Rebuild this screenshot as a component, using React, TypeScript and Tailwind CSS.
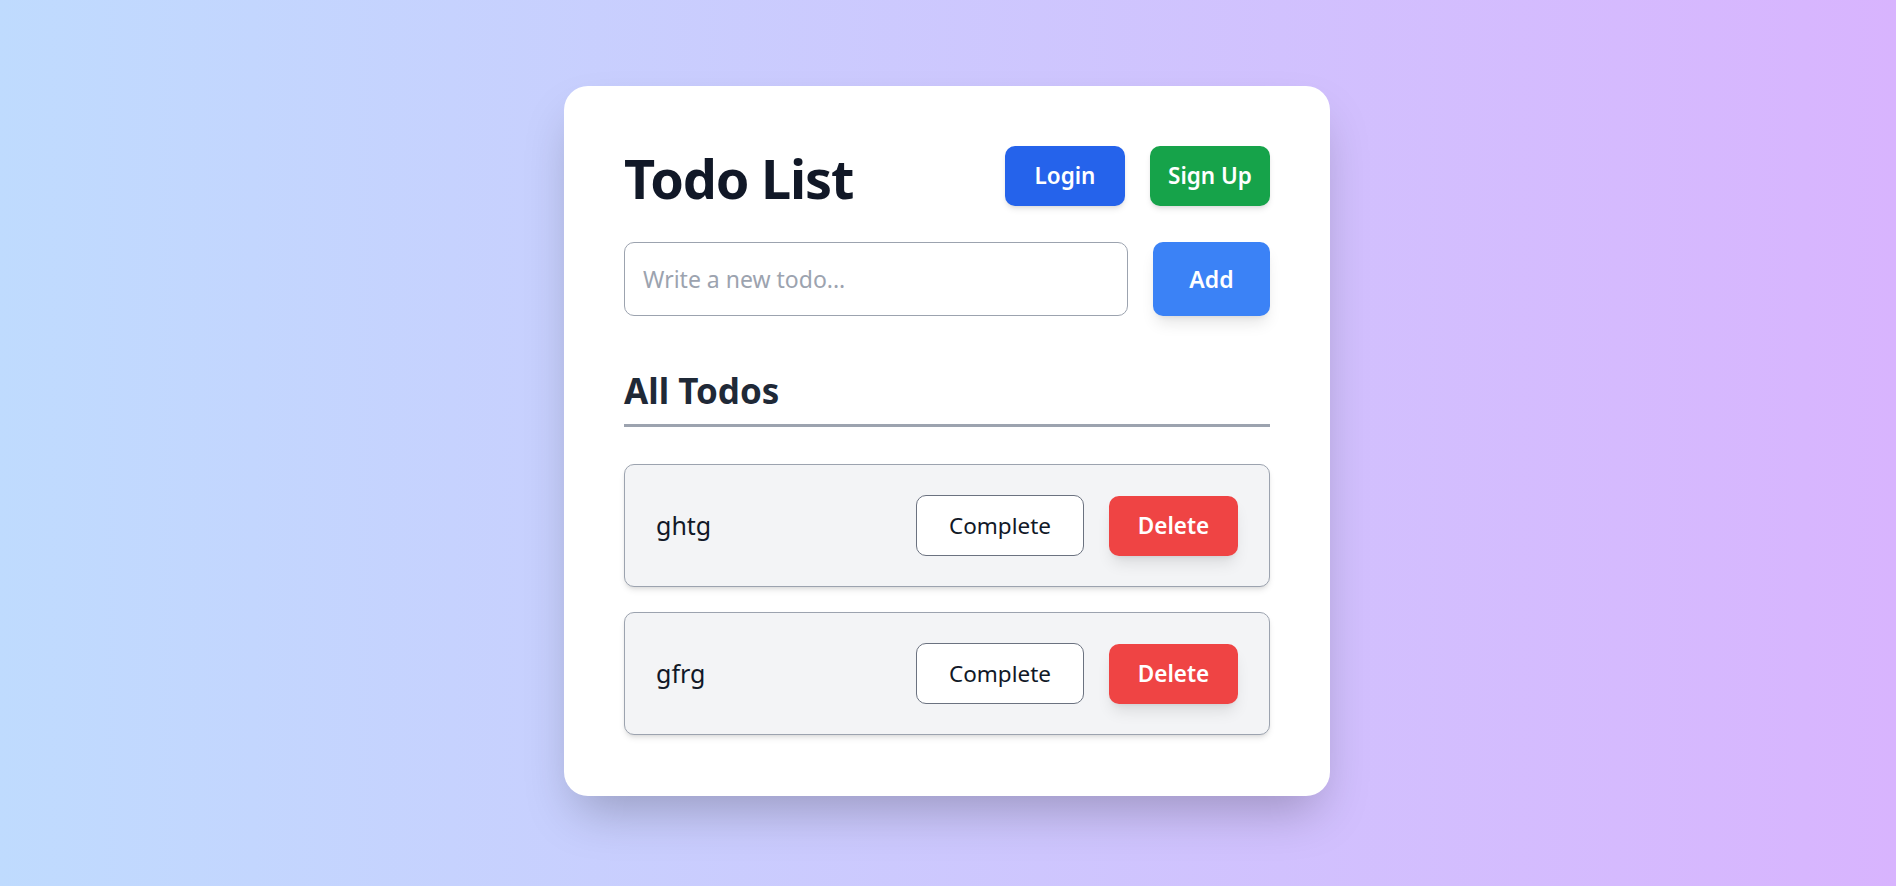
import React from "react";

const todos = ["ghtg", "gfrg"];

export default function App() {
  return (
    <div
      className="min-h-screen w-full bg-gradient-to-r from-[#bfdbfe] to-[#d8b4fe] flex justify-center pt-[86px]"
      style={{ fontFamily: '"Noto Sans", "Open Sans", sans-serif' }}
    >
      <div className="w-[766px] h-[710px] -translate-x-[1px] bg-white rounded-[24px] shadow-[0_25px_50px_-12px_rgba(0,0,0,0.25)] p-[60px] flex flex-col">
        <div className="flex items-center justify-between h-[60px]">
          <h1 className="text-[54px] leading-none font-bold text-[#111827] tracking-[-1.2px] pt-[4px]">Todo List</h1>
          <div className="flex gap-[25px]">
            <button className="w-[120px] h-[60px] rounded-[10px] bg-[#2563eb] text-white text-[22.5px] font-semibold shadow-md">
              Login
            </button>
            <button className="w-[120px] h-[60px] rounded-[10px] bg-[#16a34a] text-white text-[22.5px] font-semibold shadow-md">
              Sign Up
            </button>
          </div>
        </div>
        <div className="flex gap-[25px] mt-[36px] h-[74px]">
          <input
            className="flex-1 h-full rounded-[10px] border border-[#9ca3af] px-[18px] text-[23px] text-[#111827] placeholder:text-[#9ca3af] outline-none"
            placeholder="Write a new todo..."
          />
          <button className="w-[117px] h-full rounded-[10px] bg-[#3b82f6] text-white text-[23px] font-semibold shadow-lg">
            Add
          </button>
        </div>
        <h2 className="mt-[52px] text-[35px] leading-[45px] font-bold text-[#1f2937] pb-[11px] border-b-[3px] border-[#9ca3af]">
          All Todos
        </h2>
        <div className="mt-[37px] flex flex-col gap-[25px]">
          {todos.map((t) => (
            <div
              key={t}
              className="h-[123px] bg-[#f3f4f6] border border-[#9ca3af] rounded-[10px] shadow-md flex items-center justify-between pl-[31px] pr-[31px]"
            >
              <span className="text-[25px] text-[#111827]">{t}</span>
              <div className="flex items-center gap-[25px]">
                <button className="w-[168px] h-[61px] rounded-[10px] bg-white border border-[#6b7280] text-[22.5px] text-[#111827]">
                  Complete
                </button>
                <button className="w-[129px] h-[60px] rounded-[10px] bg-[#ef4444] text-white text-[22.5px] font-semibold shadow-lg">
                  Delete
                </button>
              </div>
            </div>
          ))}
        </div>
      </div>
    </div>
  );
}
